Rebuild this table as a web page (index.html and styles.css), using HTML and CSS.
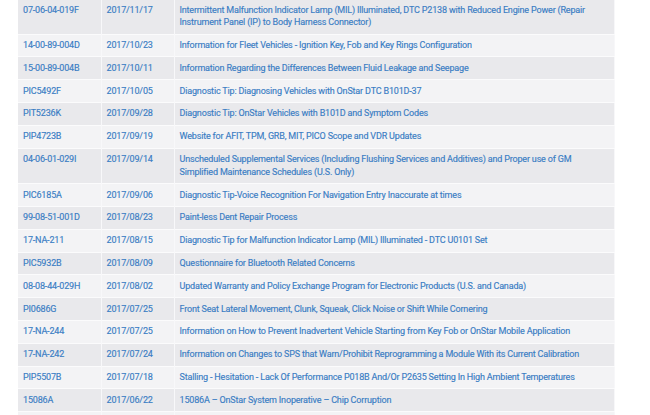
FILE: index.html
```html
<!DOCTYPE html>
<html>
<head>
<meta charset="utf-8">
<link rel="stylesheet" href="styles.css">
</head>
<body>
<table class="bulletins">
<colgroup><col class="c-id"><col class="c-date"><col class="c-title"></colgroup>
<tbody>
<tr><td>07-06-04-019F</td><td>2017/11/17</td><td>Intermittent Malfunction Indicator Lamp (MIL) Illuminated, DTC P2138 with Reduced Engine Power (Repair Instrument Panel (IP) to Body Harness Connector)</td></tr>
<tr><td>14-00-89-004D</td><td>2017/10/23</td><td>Information for Fleet Vehicles - Ignition Key, Fob and Key Rings Configuration</td></tr>
<tr><td>15-00-89-004B</td><td>2017/10/11</td><td>Information Regarding the Differences Between Fluid Leakage and Seepage</td></tr>
<tr><td>PIC5492F</td><td>2017/10/05</td><td>Diagnostic Tip: Diagnosing Vehicles with OnStar DTC B101D-37</td></tr>
<tr><td>PIT5236K</td><td>2017/09/28</td><td>Diagnostic Tip: OnStar Vehicles with B101D and Symptom Codes</td></tr>
<tr><td>PIP4723B</td><td>2017/09/19</td><td>Website for AFIT, TPM, GRB, MIT, PICO Scope and VDR Updates</td></tr>
<tr><td>04-06-01-029I</td><td>2017/09/14</td><td>Unscheduled Supplemental Services (Including Flushing Services and Additives) and Proper use of GM Simplified Maintenance Schedules (U.S. Only)</td></tr>
<tr><td>PIC6185A</td><td>2017/09/06</td><td>Diagnostic Tip-Voice Recognition For Navigation Entry Inaccurate at times</td></tr>
<tr><td>99-08-51-001D</td><td>2017/08/23</td><td>Paint-less Dent Repair Process</td></tr>
<tr><td>17-NA-211</td><td>2017/08/15</td><td>Diagnostic Tip for Malfunction Indicator Lamp (MIL) Illuminated - DTC U0101 Set</td></tr>
<tr><td>PIC5932B</td><td>2017/08/09</td><td>Questionnaire for Bluetooth Related Concerns</td></tr>
<tr><td>08-08-44-029H</td><td>2017/08/02</td><td>Updated Warranty and Policy Exchange Program for Electronic Products (U.S. and Canada)</td></tr>
<tr><td>PI0686G</td><td>2017/07/25</td><td>Front Seat Lateral Movement, Clunk, Squeak, Click Noise or Shift While Cornering</td></tr>
<tr><td>17-NA-244</td><td>2017/07/25</td><td>Information on How to Prevent Inadvertent Vehicle Starting from Key Fob or OnStar Mobile Application</td></tr>
<tr><td>17-NA-242</td><td>2017/07/24</td><td>Information on Changes to SPS that Warn/Prohibit Reprogramming a Module With its Current Calibration</td></tr>
<tr><td>PIP5507B</td><td>2017/07/18</td><td>Stalling - Hesitation - Lack Of Performance P018B And/Or P2635 Setting In High Ambient Temperatures</td></tr>
<tr><td>15086A</td><td>2017/06/22</td><td>15086A – OnStar System Inoperative – Chip Corruption</td></tr>
<tr class="empty"><td></td><td></td><td></td></tr>
</tbody>
</table>
</body>
</html>
```
FILE: styles.css
```css
html, body {
  margin: 0;
  padding: 0;
  background: #ffffff;
  overflow: hidden;
}
body {
  padding-left: 18px;
  font-family: Roboto, "Liberation Sans", Arial, sans-serif;
}
.bulletins {
  width: 597px;
  margin-top: -2px;
  border-collapse: collapse;
  table-layout: fixed;
  font-size: 9px;
  line-height: 12.8px;
  letter-spacing: -0.17px;
  color: #3a7dc4;
  border-right: 1px solid #f7f7f9;
}
.c-id { width: 83px; }
.c-date { width: 73px; }
.c-title { width: auto; }
.bulletins td {
  padding: 4.5px 5px 4.5px 5px;
  vertical-align: top;
  border-top: 1px solid #fbfbfc;
  border-left: 1px solid #f8f8fa;
  -webkit-text-stroke: 0.15px #3a7dc4;
}
.bulletins td:first-child {
  border-left: none;
}
.bulletins tr:nth-child(odd) td {
  background: #e9e9ec;
}
.bulletins tr:nth-child(even) td {
  background: #f3f3f5;
}
.bulletins tr.empty td {
  height: 8px;
  padding: 0;
}
```
